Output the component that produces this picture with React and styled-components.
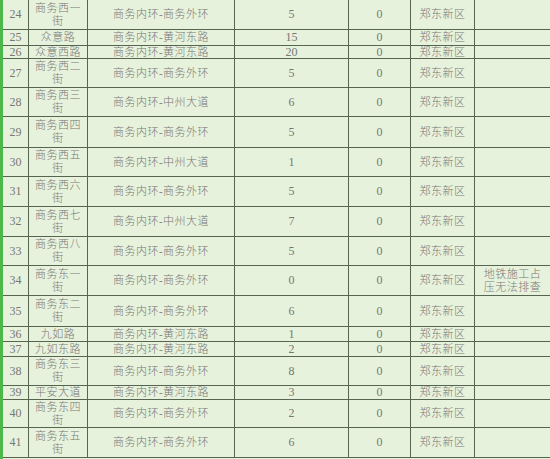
import React from "react";
import styled, { createGlobalStyle } from "styled-components";

const Global = createGlobalStyle`
  html, body { margin: 0; padding: 0; background: #e7f2dc; overflow: hidden; }
  body { width: 550px; height: 459px; }
`;

const Sheet = styled.div`
  width: 550px;
  height: 459px;
  box-sizing: border-box;
  border-left: 3px solid #4cb84a;
  background: #e7f2dc;
  overflow: hidden;
  font-family: "Liberation Serif", "Noto Sans CJK SC", serif;
  color: #777;
`;

const Row = styled.div`
  display: grid;
  grid-template-columns: 26px 59px 147px 114px 62px 64px 1fr;
  height: ${(p) => p.$h}px;
  box-sizing: border-box;
  border-bottom: 1px solid #56654f;
`;

const Cell = styled.div`
  box-sizing: border-box;
  border-right: ${(p) => (p.$last ? "none" : "1px solid #56654f")};
  display: flex;
  align-items: center;
  justify-content: center;
  text-align: center;
  padding: 0 ${(p) => p.$pad || 0}px;
  font-size: ${(p) => (p.$num ? 12 : 11)}px;
  letter-spacing: ${(p) => (p.$num ? 0 : 0.5)}px;
  line-height: 13px;
  font-weight: 300;
  white-space: normal;
  word-break: break-all;
  overflow: visible;
`;

const rows = [
  [24, "商务西一街", "商务内环-商务外环", 5, 30],
  [25, "众意路", "商务内环-黄河东路", 15, 16],
  [26, "众意西路", "商务内环-黄河东路", 20, 13],
  [27, "商务西二街", "商务内环-商务外环", 5, 29],
  [28, "商务西三街", "商务内环-中州大道", 6, 29],
  [29, "商务西四街", "商务内环-商务外环", 5, 31],
  [30, "商务西五街", "商务内环-中州大道", 1, 29],
  [31, "商务西六街", "商务内环-商务外环", 5, 30],
  [32, "商务西七街", "商务内环-中州大道", 7, 30],
  [33, "商务西八街", "商务内环-商务外环", 5, 29],
  [34, "商务东一街", "商务内环-商务外环", 0, 30, "地铁施工占压无法排查"],
  [35, "商务东二街", "商务内环-商务外环", 6, 31],
  [36, "九如路", "商务内环-黄河东路", 1, 15],
  [37, "九如东路", "商务内环-黄河东路", 2, 15],
  [38, "商务东三街", "商务内环-商务外环", 8, 29],
  [39, "平安大道", "商务内环-黄河东路", 3, 14],
  [40, "商务东四街", "商务内环-商务外环", 2, 28],
  [41, "商务东五街", "商务内环-商务外环", 6, 30],
];

export default function App() {
  return (
    <>
      <Global />
      <Sheet>
        {rows.map(([no, name, route, n, h, note]) => (
          <Row key={no} $h={h}>
            <Cell $num>{no}</Cell>
            <Cell $pad={5}>{name}</Cell>
            <Cell>{route}</Cell>
            <Cell $num>{n}</Cell>
            <Cell $num>0</Cell>
            <Cell>郑东新区</Cell>
            <Cell $last $pad={6}>{note || ""}</Cell>
          </Row>
        ))}
      </Sheet>
    </>
  );
}
